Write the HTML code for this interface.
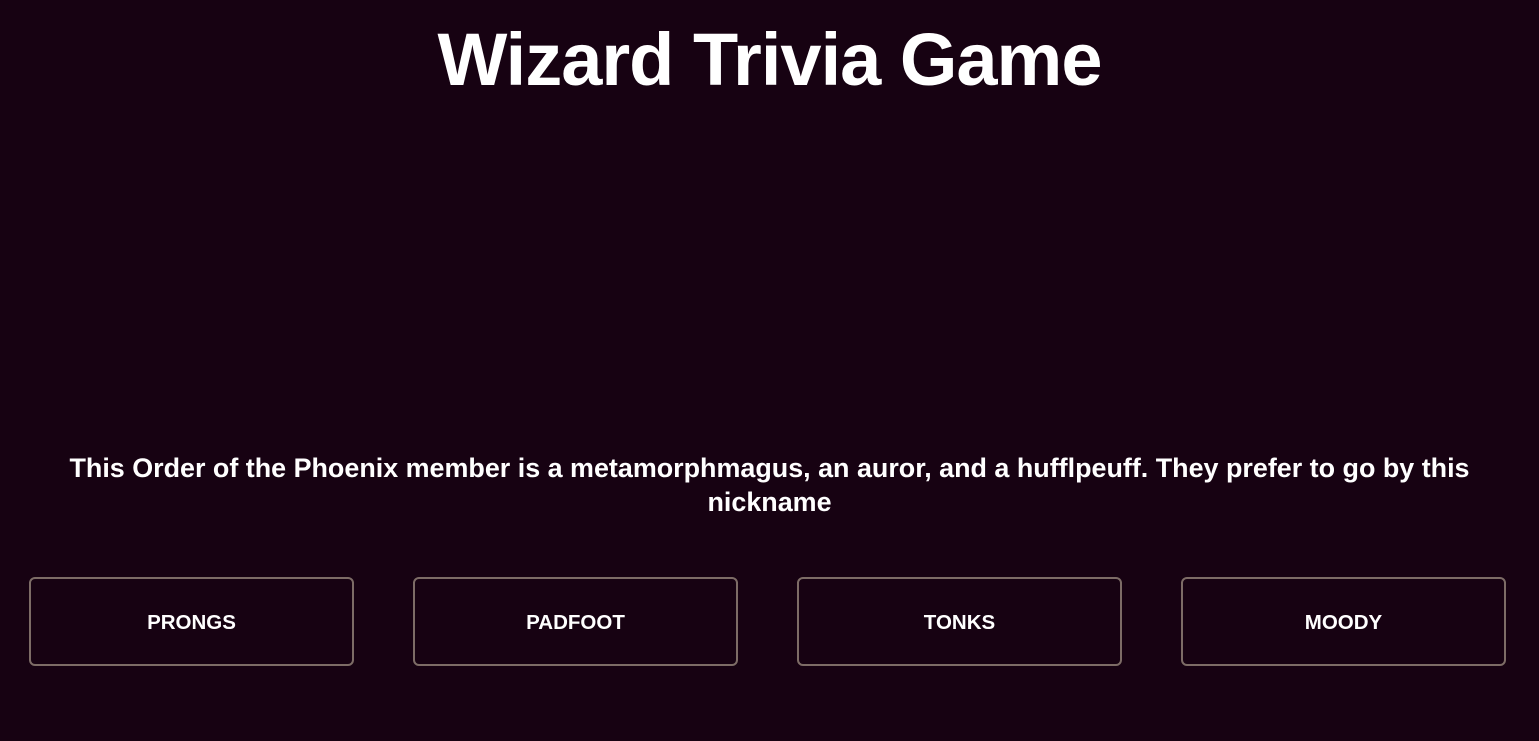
<!DOCTYPE html>
<html><head><style>
body{margin:0;width:1539px;height:741px;background:#170212;color:#fff;font-family:"Liberation Sans",sans-serif;overflow:hidden;position:relative}
h1{position:absolute;top:17px;left:0;width:1539px;text-align:center;margin:0;font-size:74px;font-weight:bold;line-height:86px;letter-spacing:-1px}
.q{position:absolute;top:451px;left:50px;width:1439px;text-align:center;font-size:26.9px;font-weight:bold;line-height:34px}
.b{position:absolute;top:577px;width:321px;height:82px;border:2px solid #7d6c66;border-radius:6px;display:flex;align-items:center;justify-content:center;font-size:20.5px;font-weight:bold;padding-top:3px;box-sizing:content-box}
</style></head><body>
<h1>Wizard Trivia Game</h1>
<div class="q">This Order of the Phoenix member is a metamorphmagus, an auror, and a hufflpeuff. They prefer to go by this nickname</div>
<div class="b" style="left:29px">PRONGS</div>
<div class="b" style="left:413px">PADFOOT</div>
<div class="b" style="left:797px">TONKS</div>
<div class="b" style="left:1181px">MOODY</div>
</body></html>
